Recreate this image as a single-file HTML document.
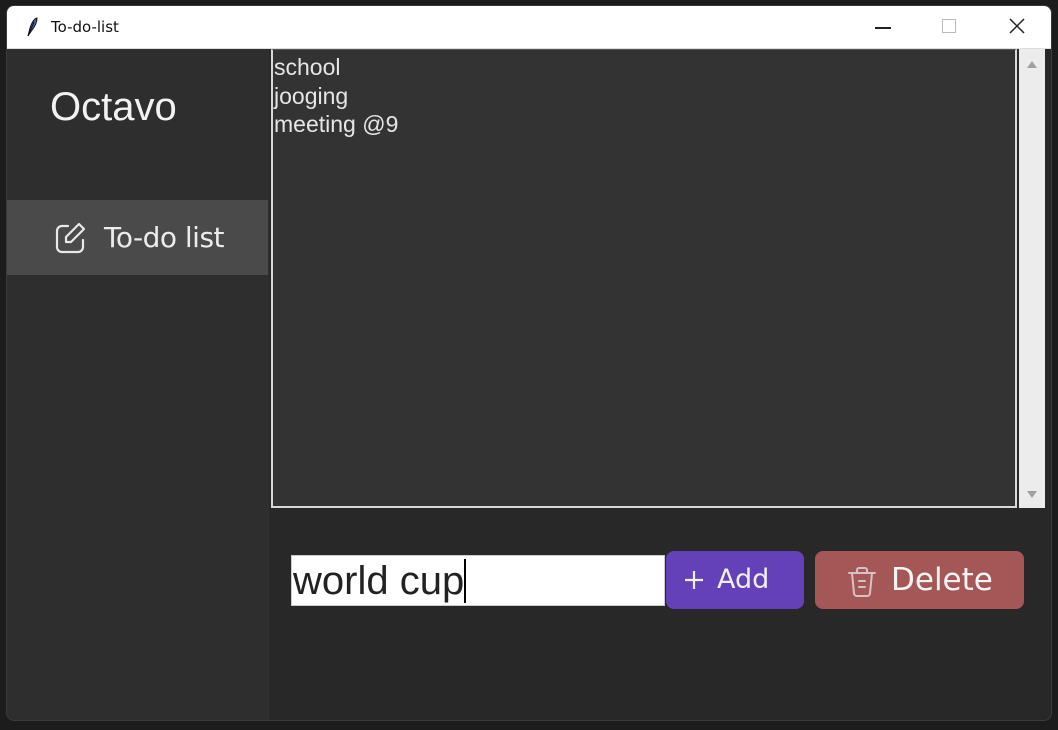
<!DOCTYPE html>
<html><head><style>
*{margin:0;padding:0;box-sizing:border-box}
body{width:1058px;height:730px;background:#1c1c1c;position:relative;overflow:hidden;font-family:"Liberation Sans",sans-serif}
.win{position:absolute;left:6px;top:5px;width:1046px;height:716px;background:#282828;border-radius:8px;overflow:hidden;border:1px solid #3a3a3a}
.title{position:absolute;left:0;top:0;width:100%;height:43px;background:#fff;border-bottom:1px solid #ddd}
.side{position:absolute;left:0;top:43px;width:262px;height:680px;background:#2e2e2e}
.abs{position:absolute}
</style></head><body>
<div class="win">
 <div class="title">
  <svg class="abs" style="left:18px;top:10px" width="14" height="22" viewBox="0 0 14 22"><path d="M3 20 L5 12 Q8 3 12 2 Q12 8 7 14 Z" fill="#3c6db5" stroke="#111" stroke-width="1"/><path d="M3 20 L9 6" stroke="#111" stroke-width="1"/></svg>
  <div class="abs" style="left:44px;top:12px;font-size:15px;color:#111;font-family:'DejaVu Sans',sans-serif">To-do-list</div>
  <div class="abs" style="left:868px;top:21px;width:16px;height:1.5px;background:#222"></div>
  <div class="abs" style="left:935px;top:13px;width:14px;height:14px;border:1px solid #bbb"></div>
  <svg class="abs" style="left:1002px;top:12px" width="16" height="16"><path d="M1 1L15 15M15 1L1 15" stroke="#222" stroke-width="1.5"/></svg>
 </div>
 <div class="side">
  <div class="abs" style="left:43px;top:36px;font-size:40px;color:#f2f2f2">Octavo</div>
  <div class="abs" style="left:0;top:151px;width:261px;height:75px;background:#4a4a4a"></div>
  <svg class="abs" style="left:47px;top:172px" width="34" height="34" viewBox="0 0 34 34" fill="none" stroke="#e8e8e8" stroke-width="2.2" stroke-linecap="round" stroke-linejoin="round"><path d="M14 5H8a5 5 0 0 0-5 5v16a5 5 0 0 0 5 5h16a5 5 0 0 0 5-5v-7"/><path d="M25 3l5 5-13 13h-5v-5z"/></svg>
  <div class="abs" style="left:97px;top:172px;font-size:28px;color:#ececec;font-family:'DejaVu Sans',sans-serif;letter-spacing:-0.5px">To-do list</div>
 </div>
 <div class="abs" style="left:264px;top:43px;width:746px;height:459px;background:#333;border:2px solid #d8d8d8;border-top:1px solid #555;padding:3px 1px;font-size:23px;line-height:28.5px;color:#e6e6e6">school<br>jooging<br>meeting @9</div>
 <div class="abs" style="left:1012px;top:43px;width:26px;height:459px;background:#ececec"></div>
 <svg class="abs" style="left:1018px;top:53px" width="14" height="10"><path d="M2 9L7 2L12 9Z" fill="#a0a0a0"/></svg>
 <svg class="abs" style="left:1018px;top:484px" width="14" height="10"><path d="M2 1L7 8L12 1Z" fill="#a0a0a0"/></svg>
 <div class="abs" style="left:284px;top:549px;width:374px;height:51px;background:#fff;border:1px solid #ccc;font-size:40px;color:#222;padding:3px 0 0 1px;line-height:42px">world cup<span style="display:inline-block;width:2px;height:44px;background:#000;vertical-align:-9px"></span></div>
 <div class="abs" style="left:659px;top:545px;width:138px;height:58px;background:#6441b8;border-radius:8px"></div>
 <svg class="abs" style="left:677px;top:564px" width="20" height="20"><path d="M10 1V19M1 10H19" stroke="#f0f0f0" stroke-width="2.2"/></svg>
 <div class="abs" style="left:710px;top:558px;font-size:27px;color:#f0f0f0;font-family:'DejaVu Sans',sans-serif">Add</div>
 <div class="abs" style="left:808px;top:545px;width:209px;height:58px;background:#a55757;border-radius:8px"></div>
 <svg class="abs" style="left:839px;top:560px" width="32" height="32" viewBox="0 0 32 32" fill="none" stroke="#d6c2c2" stroke-width="2" stroke-linecap="round"><path d="M3 7H29M11 7V4a2 2 0 0 1 2-2h6a2 2 0 0 1 2 2v3M6 7l2 20a3 3 0 0 0 3 3h10a3 3 0 0 0 3-3l2-20M13 15h6M13 21h6"/></svg>
 <div class="abs" style="left:884px;top:556px;font-size:31px;color:#f4f4f4;font-family:'DejaVu Sans',sans-serif">Delete</div>
</div>
</body></html>
